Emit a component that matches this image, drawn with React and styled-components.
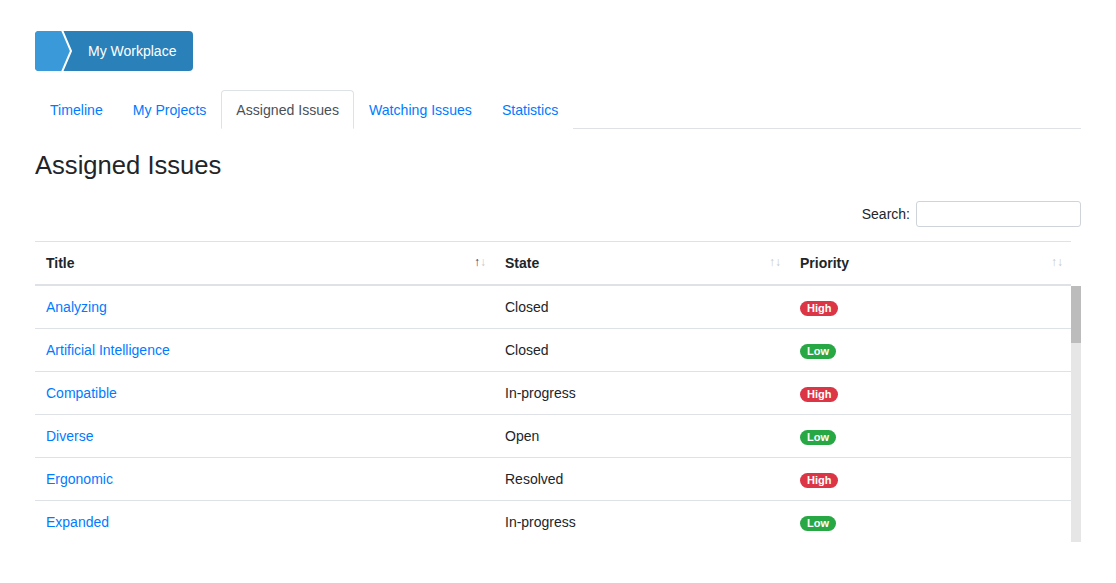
import React from 'react'
import styled, { createGlobalStyle } from 'styled-components'

const GlobalStyle = createGlobalStyle`
  body {
    margin: 0;
    background: #fff;
    font-family: "Liberation Sans", Arial, sans-serif;
    color: #212529;
  }
  * { box-sizing: border-box; }
`

// only the rows that fit in the visible scroll area
const issues = [
  ['Analyzing', 'Closed', 'High'],
  ['Artificial Intelligence', 'Closed', 'Low'],
  ['Compatible', 'In-progress', 'High'],
  ['Diverse', 'Open', 'Low'],
  ['Ergonomic', 'Resolved', 'High'],
  ['Expanded', 'In-progress', 'Low']
]

const tabs = ['Timeline', 'My Projects', 'Assigned Issues', 'Watching Issues', 'Statistics']

const Cols = () => (
  <colgroup>
    <col style={{width: '459px'}} />
    <col style={{width: '295px'}} />
    <col style={{width: '282px'}} />
  </colgroup>
)

const App = () => {
  return (
    <>
      <GlobalStyle />
      <Page>
        <Crumb>
          <svg width='40' height='40' viewBox='0 0 40 40'>
            <polygon points='0,0 27,0 36,20 27,40 0,40' fill='#3a9ad9' />
            <polyline points='27,-1 36,20 27,41' fill='none' stroke='#fff' strokeWidth='2' />
          </svg>
          <CrumbText>My Workplace</CrumbText>
        </Crumb>

        <Tabs>
          {tabs.map(t => (
            <Tab key={t} active={t === 'Assigned Issues'}>{t}</Tab>
          ))}
        </Tabs>

        <Heading>Assigned Issues</Heading>

        <SearchRow>
          <label>Search:</label>
          <SearchInput type='text' />
        </SearchRow>

        <HeadTable>
          <Cols />
          <thead>
            <tr>
              <Th>Title<Sort><Arrow on>↑</Arrow><Arrow>↓</Arrow></Sort></Th>
              <Th>State<Sort><Arrow>↑</Arrow><Arrow>↓</Arrow></Sort></Th>
              <Th>Priority<Sort><Arrow>↑</Arrow><Arrow>↓</Arrow></Sort></Th>
            </tr>
          </thead>
        </HeadTable>

        <ScrollBody>
          <BodyTable>
            <Cols />
            <tbody>
              {issues.map((row, index) => (
                <tr key={index}>
                  <Td><IssueLink href='#'>{row[0]}</IssueLink></Td>
                  <Td>{row[1]}</Td>
                  <Td><Badge level={row[2]}>{row[2]}</Badge></Td>
                </tr>
              ))}
            </tbody>
          </BodyTable>
          <Track>
            <Thumb />
          </Track>
        </ScrollBody>
      </Page>
    </>
  )
}

const Page = styled.div`
  padding: 31px 35px 0 35px;
`

const Crumb = styled.div`
  display: inline-flex;
  align-items: center;
  height: 40px;
  background-color: #2a80b9;
  border-radius: 4px;
  overflow: hidden;

  svg {
    display: block;
    flex-shrink: 0;
  }
`

const CrumbText = styled.span`
  color: #fff;
  font-size: 14px;
  padding: 0 17px 0 13px;
`

const Tabs = styled.div`
  display: flex;
  margin-top: 15px;
  border-bottom: 1px solid #dee2e6;
`

const Tab = styled.a`
  display: block;
  font-size: 14.1px;
  line-height: 21px;
  padding: 9px 14px 7px 14px;
  margin-bottom: -1px;
  color: ${p => p.active ? '#495057' : '#007bff'};
  background: #fff;
  border: 1px solid ${p => p.active ? '#dee2e6' : 'transparent'};
  border-bottom-color: ${p => p.active ? '#fff' : 'transparent'};
  border-top-left-radius: 4px;
  border-top-right-radius: 4px;
  cursor: pointer;
`

const Heading = styled.h3`
  font-size: 25.6px;
  font-weight: 400;
  line-height: 32px;
  margin: 20px 0 0 0;
`

const SearchRow = styled.div`
  display: flex;
  justify-content: flex-end;
  align-items: center;
  margin-top: 20px;
  font-size: 14px;
`

const SearchInput = styled.input`
  width: 165px;
  height: 26px;
  margin-left: 6px;
  border: 1px solid #ced4da;
  border-radius: 3px;
  outline: none;
  font-size: 14px;
`

const HeadTable = styled.table`
  width: 1036px;
  margin-top: 14px;
  border-collapse: collapse;
  table-layout: fixed;
`

const Th = styled.th`
  position: relative;
  text-align: left;
  font-size: 14px;
  font-weight: 700;
  line-height: 20px;
  padding: 11px 11px;
  border-top: 1px solid #dee2e6;
  border-bottom: 2px solid #dee2e6;
`

const Sort = styled.span`
  position: absolute;
  right: 8px;
  top: 13px;
  font-size: 12px;
  font-weight: 400;
  line-height: 14px;
  letter-spacing: -1px;
`

const Arrow = styled.span`
  color: ${p => p.on ? '#3a2f48' : '#c5c8cc'};
  margin-right: 1px;
`

const ScrollBody = styled.div`
  display: flex;
  width: 1046px;
  height: 256px;
  overflow: hidden;
`

const Track = styled.div`
  width: 10px;
  flex-shrink: 0;
  background: #e6e6e6;
`

const Thumb = styled.div`
  height: 57px;
  background: #bcbcbc;
`

const BodyTable = styled.table`
  width: 1036px;
  flex-shrink: 0;
  align-self: flex-start;
  border-collapse: collapse;
  table-layout: fixed;
`

const Td = styled.td`
  font-size: 14px;
  line-height: 20px;
  padding: 11px 11px;
  border-top: 1px solid #dee2e6;

  tr:first-child & {
    border-top: none;
  }
`

const IssueLink = styled.a`
  color: #007bff;
  text-decoration: none;
`

const Badge = styled.span`
  display: inline-block;
  font-size: 11px;
  font-weight: 700;
  line-height: 11px;
  padding: 2px 7px;
  border-radius: 10px;
  color: #fff;
  vertical-align: middle;
  background-color: ${p => p.level === 'High' ? '#dc3545' : '#28a745'};
`

export default App
